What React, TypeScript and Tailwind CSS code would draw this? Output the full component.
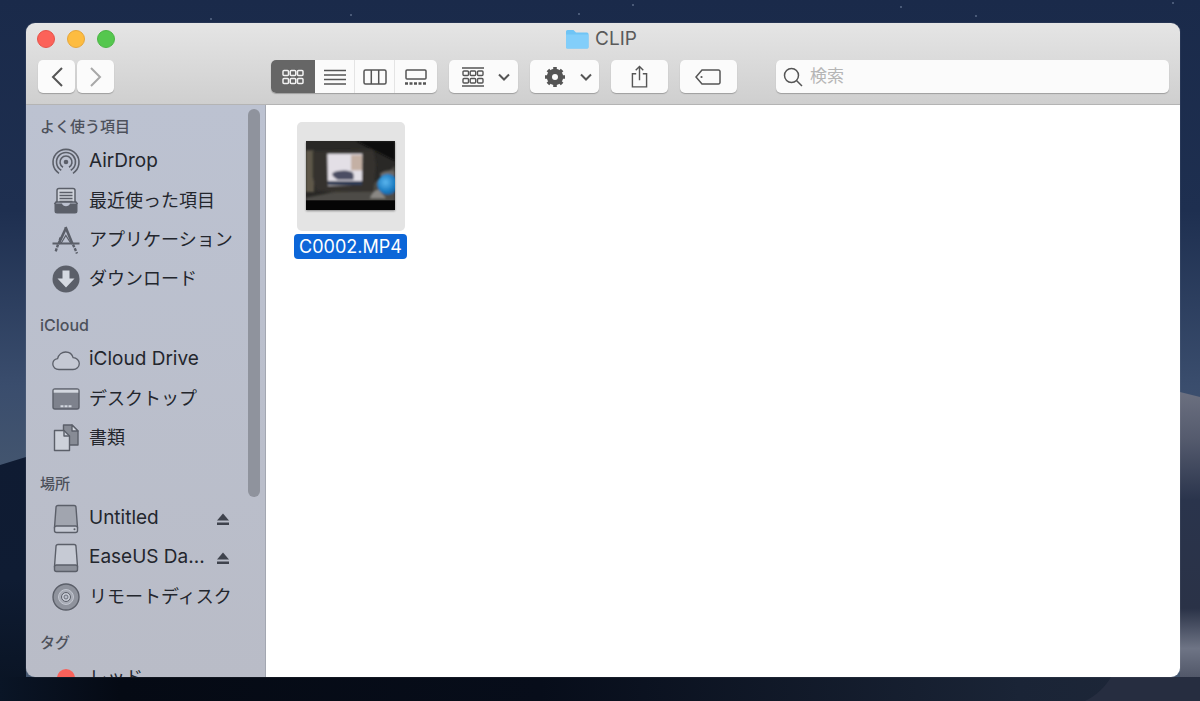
import { ReactNode } from 'react';

const font = { fontFamily: 'Inter, "Noto Sans CJK JP", sans-serif' };

const G = '#5b5f69';

function AirDropIcon() {
  return (
    <svg viewBox="0 0 30 30" className="w-[30px] h-[30px]" fill="none" stroke={G} strokeWidth="1.6">
      <path d="M8 26.300A13 13 0 1 1 22 26.300" />
      <path d="M10.250 23.200A9.500 9.500 0 1 1 19.750 23.200" />
      <path d="M12 20.200A6 6 0 1 1 18 20.200" />
      <circle cx="15" cy="15" r="2.300" fill={G} stroke="none" />
    </svg>
  );
}

function RecentsIcon() {
  return (
    <svg viewBox="0 0 30 30" className="w-[30px] h-[30px]">
      <path d="M6 4.500a2 2 0 0 1 2-2h14a2 2 0 0 1 2 2V16H6z" fill="#cfd3db" stroke={G} strokeWidth="1.500" />
      <path d="M8.500 6.500h13M8.500 9.500h13M8.500 12.500h13M8.500 15.500h13" stroke={G} strokeWidth="1.500" />
      <path d="M3.500 17.500h7.500c.5 1.800 2 2.800 4 2.800s3.500-1 4-2.800h7.500V25a2.500 2.500 0 0 1-2.500 2.500H6A2.500 2.500 0 0 1 3.500 25z" fill={G} />
      <path d="M6 15 3.500 18M24 15l2.500 3" stroke={G} strokeWidth="1.800" />
    </svg>
  );
}

function AppsIcon() {
  return (
    <svg viewBox="0 0 30 30" className="w-[30px] h-[30px]" fill="none" stroke={G}>
      <path d="M15 3 7.500 19" strokeWidth="2.600" />
      <path d="M14.500 2 21.500 19" strokeWidth="2.600" />
      <path d="M1.500 18.500h27" strokeWidth="2" />
      <path d="M9.500 12.500 8 18.500M7 19.500 4.500 27" strokeWidth="2.400" strokeDasharray="3 1.200" />
      <path d="M22 19.500 26 28.500" strokeWidth="2.400" strokeDasharray="3 1.200" />
      <path d="M10 18.500 14.800 10.500 20 18.500" strokeWidth="1.200" />
    </svg>
  );
}

function DownloadIcon() {
  return (
    <svg viewBox="0 0 30 30" className="w-[30px] h-[30px]">
      <circle cx="15" cy="15" r="13.500" fill={G} />
      <path d="M11.500 6.500h7v8h5L15 23.500 6.500 14.500h5z" fill="#d5d9e1" />
    </svg>
  );
}

function CloudIcon() {
  return (
    <svg viewBox="0 0 30 30" className="w-[30px] h-[30px]">
      <path d="M8 24.500c-3.500 0-6.200-2.400-6.200-5.500 0-2.800 2-5 4.800-5.400C7.600 9.600 11 7 14.600 7c3.600 0 6.600 2.300 7.500 5.600 3.500.2 6.200 2.900 6.200 6 0 3.300-2.800 5.900-6.300 5.900z" fill="#c5c9d4" stroke={G} strokeWidth="1.300" />
    </svg>
  );
}

function DesktopIcon() {
  return (
    <svg viewBox="0 0 30 30" className="w-[30px] h-[30px]">
      <rect x="2" y="5" width="26" height="20" rx="2" fill="#7e828d" stroke={G} strokeWidth="1.400" />
      <rect x="2.700" y="5.700" width="24.600" height="3" fill="#d3d7df" />
      <path d="M9.500 22.200h3M13.500 22.200h3M17.500 22.200h3" stroke="#d3d7df" strokeWidth="2" />
    </svg>
  );
}

function DocsIcon() {
  return (
    <svg viewBox="0 0 30 30" className="w-[30px] h-[30px]" stroke={G} strokeWidth="1.400" strokeLinejoin="round">
      <path d="M12.500 2h8.500l6 6v14H12.500z" fill="#878b95" />
      <path d="M21 2v6h6z" fill="#d5d9e1" />
      <path d="M3.500 7.500h9.500l5.500 5.500v14.500h-15z" fill="#cdd1da" />
      <path d="M13 7.500V13h5.500" fill="none" />
    </svg>
  );
}

function DriveIcon({ slim }: { slim?: boolean }) {
  return (
    <svg viewBox="0 0 30 30" className="w-[30px] h-[30px]">
      <path d="M7 1.500h16a2 2 0 0 1 2 2l1.500 20h-23L5 3.500a2 2 0 0 1 2-2z" fill={slim ? '#c6cad4' : '#a1a5af'} stroke={G} strokeWidth="1.400" />
      <rect x="3.500" y="22" width="23" height="6.500" rx="2" fill={slim ? '#8d919b' : '#c6cad4'} stroke={G} strokeWidth="1.400" />
      {!slim && <circle cx="23.500" cy="25.300" r="1" fill={G} />}
    </svg>
  );
}

function DiscIcon() {
  return (
    <svg viewBox="0 0 30 30" className="w-[30px] h-[30px]">
      <circle cx="15" cy="15" r="13" fill="#8f939d" stroke={G} strokeWidth="1.400" />
      <circle cx="15" cy="15" r="7.500" fill="#a8acb6" stroke="#c2c6d0" strokeWidth="1" />
      <circle cx="15" cy="15" r="4.500" fill="#c6cad4" stroke={G} strokeWidth="1" />
      <circle cx="15" cy="15" r="2" fill="#b9bdc9" stroke={G} strokeWidth="0.800" />
    </svg>
  );
}

function Eject() {
  return (
    <svg viewBox="0 0 14 14" className="w-[14px] h-[14px] shrink-0 ml-auto">
      <path d="M7 1.500 13 8.500H1z" fill="#3f434d" />
      <rect x="1" y="10.500" width="12" height="2.500" fill="#3f434d" />
    </svg>
  );
}

function SideHeader({ children, latin }: { children: ReactNode; latin?: boolean }) {
  return (
    <div className={`h-[30px] pl-[14px] flex items-center font-medium text-[#4d515b] ${latin ? 'text-[16px]' : 'text-[15px]'}`}>
      {children}
    </div>
  );
}

function SideItem({ icon, label, eject, latin }: { icon: ReactNode; label: string; eject?: boolean; latin?: boolean }) {
  return (
    <div className={`h-[39px] pl-[25px] pr-[35px] flex items-center gap-2 text-[#23262d] whitespace-nowrap ${latin ? 'text-[19px]' : 'text-[18px]'}`}>
      <span className="w-[30px] h-[30px] shrink-0">{icon}</span>
      <span>{label}</span>
      {eject && <Eject />}
    </div>
  );
}

function ToolButton({ children, className }: { children: ReactNode; className: string }) {
  return (
    <div className={`h-[33px] rounded-[5px] bg-[#fbfbfb] shadow-[0_1px_1px_rgba(0,0,0,0.25)] flex items-center justify-center ${className}`}>
      {children}
    </div>
  );
}

const ic = '#555555';

function GridGlyph() {
  return (
    <svg viewBox="0 0 22 16" className="w-[22px] h-[16px]" fill="none" stroke="currentColor" strokeWidth="1.500">
      {[1, 8.250, 15.500].map((x) =>
        [1.500, 9.500].map((y) => <rect key={`${x}-${y}`} x={x} y={y} width="5.500" height="5" rx="1" />)
      )}
    </svg>
  );
}

function Chevron() {
  return (
    <svg viewBox="0 0 12 8" className="w-[12px] h-[8px]" fill="none" stroke={ic} strokeWidth="2">
      <path d="M1 1.500 6 6.500l5-5" />
    </svg>
  );
}

function Toolbar() {
  return (
    <div className="flex h-[33px] pl-[12px] mt-[5px]">
      <ToolButton className="w-[37px]">
        <svg viewBox="0 0 12 20" className="w-[12px] h-[20px]" fill="none" stroke={ic} strokeWidth="2">
          <path d="M11 1 2 10l9 9" />
        </svg>
      </ToolButton>
      <ToolButton className="w-[37px] ml-[2px]">
        <svg viewBox="0 0 12 20" className="w-[12px] h-[20px]" fill="none" stroke="#a8a8a8" strokeWidth="2">
          <path d="m1 1 9 9-9 9" />
        </svg>
      </ToolButton>

      <div className="flex ml-[157px] h-[33px] rounded-[5px] bg-[#fbfbfb] shadow-[0_1px_1px_rgba(0,0,0,0.25)] overflow-hidden">
        <div className="w-[44px] bg-[#666666] flex items-center justify-center text-[#f2f2f2]">
          <GridGlyph />
        </div>
        <div className="w-[40px] flex items-center justify-center border-r border-[#e4e4e4]">
          <svg viewBox="0 0 22 16" className="w-[22px] h-[16px]" stroke={ic} strokeWidth="1.300">
            <path d="M0 1.500h22M0 6h22M0 10.500h22M0 15h22" />
          </svg>
        </div>
        <div className="w-[40px] flex items-center justify-center border-r border-[#e4e4e4]">
          <svg viewBox="0 0 24 16" className="w-[24px] h-[16px]" fill="none" stroke={ic} strokeWidth="1.500">
            <rect x="1" y="1" width="22" height="14" rx="1.500" />
            <path d="M8.300 1v14M15.700 1v14" />
          </svg>
        </div>
        <div className="w-[42px] flex items-center justify-center">
          <svg viewBox="0 0 22 16" className="w-[22px] h-[16px]" fill="none" stroke={ic} strokeWidth="1.500">
            <rect x="1" y="1" width="20" height="9" rx="1" />
            <path d="M0 14.500h22" strokeWidth="2.500" strokeDasharray="3 1.500" />
          </svg>
        </div>
      </div>

      <ToolButton className="w-[69px] ml-[12px] gap-[14px] pl-[5px]">
        <svg viewBox="0 0 22 20" className="w-[22px] h-[20px]" fill="none" stroke={ic} strokeWidth="1.400">
          <path d="M0 1h22M0 19h22" />
          <rect x="1" y="4" width="5.500" height="4.500" rx="1" />
          <rect x="8.200" y="4" width="5.500" height="4.500" rx="1" />
          <rect x="15.500" y="4" width="5.500" height="4.500" rx="1" />
          <rect x="1" y="11.500" width="5.500" height="4.500" rx="1" />
          <rect x="8.200" y="11.500" width="5.500" height="4.500" rx="1" />
          <rect x="15.500" y="11.500" width="5.500" height="4.500" rx="1" />
        </svg>
        <Chevron />
      </ToolButton>

      <ToolButton className="w-[69px] ml-[12px] gap-[14px] pl-[7px]">
        <svg viewBox="0 0 22 22" className="w-[22px] h-[22px]">
          <circle cx="11" cy="11" r="6" fill="none" stroke={ic} strokeWidth="4.500" />
          <path d="M11 1v20M1 11h20M3.900 3.900l14.200 14.200M18.100 3.900 3.900 18.100" stroke={ic} strokeWidth="3.600" />
          <circle cx="11" cy="11" r="3" fill="#fbfbfb" />
        </svg>
        <Chevron />
      </ToolButton>

      <ToolButton className="w-[57px] ml-[12px] pr-[1px]">
        <svg viewBox="0 0 18 24" className="w-[17px] h-[23px]" fill="none" stroke={ic} strokeWidth="1.500">
          <path d="M5.500 9H1.500v14h15V9h-4" />
          <path d="M9 16V1.500M5 5.300 9 1.500l4 3.800" />
        </svg>
      </ToolButton>

      <ToolButton className="w-[57px] ml-[12px] pr-[1px]">
        <svg viewBox="0 0 26 16" className="w-[26px] h-[16px]" fill="none" stroke={ic} strokeWidth="1.500">
          <path d="M7 1h16.500a1.500 1.500 0 0 1 1.500 1.500v11a1.500 1.500 0 0 1-1.500 1.500H7L1 8z" />
          <circle cx="6.500" cy="8" r="1.100" fill={ic} stroke="none" />
        </svg>
      </ToolButton>

      <ToolButton className="w-[393px] ml-[39px] !justify-start pl-[7px] gap-[7px]">
        <svg viewBox="0 0 20 20" className="w-[20px] h-[20px]" fill="none" stroke={ic} strokeWidth="1.500">
          <circle cx="8.500" cy="8.500" r="7" />
          <path d="m13.500 13.500 5.500 5.500" />
        </svg>
        <span className="text-[17px] text-[#b5b5b5] pt-[1px]">検索</span>
      </ToolButton>
    </div>
  );
}

function Thumbnail() {
  return (
    <svg viewBox="0 0 267 207" className="w-[89px] h-[69px] shadow-[0_1px_2px_rgba(0,0,0,0.4)]">
      <defs>
        <radialGradient id="ball" cx="0.4" cy="0.4" r="0.7">
          <stop offset="0" stopColor="#5cb6ee" />
          <stop offset="0.6" stopColor="#1f7fc4" />
          <stop offset="1" stopColor="#0f5a96" />
        </radialGradient>
        <filter id="soft">
          <feGaussianBlur stdDeviation="2.500" />
        </filter>
      </defs>
      <rect width="267" height="207" fill="#292826" />
      <g filter="url(#soft)">
        <path d="M150 0h117v60z" fill="#0e0e0c" />
        <path d="M0 28h24v125H0z" fill="#5e584a" />
        <path d="M0 170 200 130l67-55v108H0z" fill="#4e4c46" />
        <path d="M20 30 202 26l8 44-4 50-4 32-120 2-52-6-10-40z" fill="#34322e" />
        <path d="M64 38h105l-1 93-102 3z" fill="#e3dfe6" />
        <path d="M135 42h33v46h-33z" fill="#c4b0a4" />
        <path d="M80 96c15-9 40-9 56-4 9 3 8 16 6 24H95c-8-6-20-12-15-20z" fill="#4b4d63" />
        <path d="M66 120h102v12H66z" fill="#2d3a55" />
        <path d="M192 172c5-14 14-24 26-26l22 26z" fill="#8a8884" />
        <path d="M222 98c12-10 30-12 45-6v12h-45z" fill="#6a6864" />
        <circle cx="245" cy="130" r="31" fill="url(#ball)" />
      </g>
      <rect y="178" width="267" height="29" fill="#050505" />
    </svg>
  );
}

export default function App() {
  return (
    <div className="relative w-[1200px] h-[701px] overflow-hidden bg-[#1a2b4a] pt-[23px] pl-[26px]" style={font}>
      <svg viewBox="0 0 1200 701" className="absolute inset-0 w-[1200px] h-[701px]">
        <defs>
          <linearGradient id="sky" x1="0" y1="0" x2="0" y2="1">
            <stop offset="0" stopColor="#1a2a4a" />
            <stop offset="0.3" stopColor="#1e2f50" />
            <stop offset="0.55" stopColor="#3a4d6d" />
            <stop offset="0.68" stopColor="#44566f" />
          </linearGradient>
          <linearGradient id="right" x1="0" y1="392" x2="0" y2="701" gradientUnits="userSpaceOnUse">
            <stop offset="0" stopColor="#6c7080" />
            <stop offset="0.15" stopColor="#555b6e" />
            <stop offset="0.35" stopColor="#2a344c" />
            <stop offset="0.7" stopColor="#2a3247" />
            <stop offset="0.83" stopColor="#6e7485" />
            <stop offset="1" stopColor="#3a4052" />
          </linearGradient>
          <linearGradient id="hill" x1="0" y1="0" x2="0" y2="1">
            <stop offset="0" stopColor="#0f1b32" />
            <stop offset="0.5" stopColor="#0f1c33" />
            <stop offset="1" stopColor="#091322" />
          </linearGradient>
          <linearGradient id="floor" x1="0" y1="0" x2="1" y2="0">
            <stop offset="0" stopColor="#0a1526" />
            <stop offset="0.1" stopColor="#050a14" />
            <stop offset="0.45" stopColor="#070d1a" />
            <stop offset="0.85" stopColor="#1a2436" />
            <stop offset="1" stopColor="#1e2739" />
          </linearGradient>
        </defs>
        <rect width="1200" height="701" fill="url(#sky)" />
        <path d="M0 465 26 457V701H0z" fill="url(#hill)" />
        <rect y="677" width="1200" height="24" fill="url(#floor)" />
        <path d="M1180 392 1200 397V701H1180z" fill="url(#right)" />
        <path d="M1085 701c12-6 20-14 26-24h89v24z" fill="#262d40" />
        {[[211, 19], [351, 15], [633, 5], [579, 14], [901, 7], [976, 16], [1173, 3]].map(([x, y]) => (
          <circle key={`${x}-${y}`} cx={x} cy={y} r="0.7" fill="#9fb0c8" />
        ))}
      </svg>

      <div className="relative w-[1154px] h-[654px] rounded-[9px] overflow-hidden flex flex-col shadow-[0_0_1px_rgba(255,255,255,0.5)]">
        <div className="h-[82px] shrink-0 bg-gradient-to-b from-[#e5e5e5] to-[#cfcfcf] border-b border-[#b4b4b4]">
          <div className="grid grid-cols-[1fr_auto_1fr] items-center h-[32px]">
            <div className="flex items-center gap-[12px] pl-[11px]">
              <span className="w-[18px] h-[18px] rounded-full bg-[#fc6259] border border-[#e5534a]" />
              <span className="w-[18px] h-[18px] rounded-full bg-[#fdbc40] border border-[#e5a63b]" />
              <span className="w-[18px] h-[18px] rounded-full bg-[#55c74e] border border-[#4cb446]" />
            </div>
            <div className="flex items-center gap-[6px] pr-[4px]">
              <svg viewBox="0 0 24 20" className="w-[24px] h-[20px]">
                <path d="M1 2.500A1.500 1.500 0 0 1 2.500 1h6L11 3.500h11A1.500 1.500 0 0 1 23.500 5v13a1.500 1.500 0 0 1-1.500 1.500H2.500A1.500 1.500 0 0 1 1 18z" fill="#6fc4f5" />
                <path d="M1 5.500h22.500V18a1.500 1.500 0 0 1-1.500 1.500H2.500A1.500 1.500 0 0 1 1 18z" fill="#82cefa" />
              </svg>
              <span className="text-[19px] text-[#5a5a5a]">CLIP</span>
            </div>
            <div />
          </div>
          <Toolbar />
        </div>

        <div className="flex flex-1 min-h-0">
          <div className="relative w-[240px] shrink-0 bg-gradient-to-b from-[#bcc2d1] to-[#b9bcc7] border-r border-[#a3a7b1] pt-[7px] overflow-hidden">
            <SideHeader>よく使う項目</SideHeader>
            <SideItem icon={<AirDropIcon />} label="AirDrop" latin />
            <SideItem icon={<RecentsIcon />} label="最近使った項目" />
            <SideItem icon={<AppsIcon />} label="アプリケーション" />
            <SideItem icon={<DownloadIcon />} label="ダウンロード" />
            <div className="h-[12px]" />
            <SideHeader latin>iCloud</SideHeader>
            <SideItem icon={<CloudIcon />} label="iCloud Drive" latin />
            <SideItem icon={<DesktopIcon />} label="デスクトップ" />
            <SideItem icon={<DocsIcon />} label="書類" />
            <div className="h-[12px]" />
            <SideHeader>場所</SideHeader>
            <SideItem icon={<DriveIcon />} label="Untitled" eject latin />
            <SideItem icon={<DriveIcon slim />} label="EaseUS Da..." eject latin />
            <SideItem icon={<DiscIcon />} label="リモートディスク" />
            <div className="h-[12px]" />
            <SideHeader>タグ</SideHeader>
            <SideItem
              icon={
                <span className="flex items-center justify-center w-[30px] h-[30px]">
                  <span className="w-[18px] h-[18px] rounded-full bg-[#f9615a]" />
                </span>
              }
              label="レッド"
            />
            <div className="absolute left-[222px] top-[4px] w-[12px] h-[388px] rounded-full bg-[#8f939d]" />
          </div>

          <div className="flex-1 bg-white pl-[28px] pt-[17px]">
            <div className="flex flex-col items-center w-[113px]">
              <div className="w-[108px] h-[109px] rounded-[5px] bg-[#e4e4e4] flex items-center justify-center pb-[3px]">
                <Thumbnail />
              </div>
              <div className="mt-[3px] w-[113px] h-[25px] rounded-[4px] bg-[#0c66d8] text-white text-[18px] flex items-center justify-center whitespace-nowrap">
                C0002.MP4
              </div>
            </div>
          </div>
        </div>
      </div>
    </div>
  );
}
